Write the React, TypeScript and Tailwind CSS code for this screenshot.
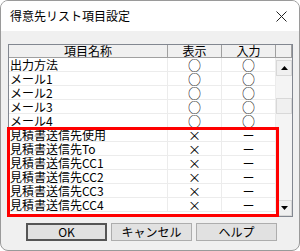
import React from 'react';

const rows = [
  { name: '出力方法', show: '○', input: '○' },
  { name: 'メール1', show: '○', input: '○' },
  { name: 'メール2', show: '○', input: '○' },
  { name: 'メール3', show: '○', input: '○' },
  { name: 'メール4', show: '○', input: '○' },
  { name: '見積書送信先使用', show: '×', input: '－' },
  { name: '見積書送信先To', show: '×', input: '－' },
  { name: '見積書送信先CC1', show: '×', input: '－' },
  { name: '見積書送信先CC2', show: '×', input: '－' },
  { name: '見積書送信先CC3', show: '×', input: '－' },
  { name: '見積書送信先CC4', show: '×', input: '－' },
];

function Btn({ label, primary }: { label: string; primary?: boolean }) {
  return (
    <button
      className={`w-[81px] h-[18px] flex items-center justify-center bg-[#e1e1e1] text-[12px] leading-[14px] text-black ${
        primary ? 'border-2 border-[#555]' : 'border border-[#adadad]'
      }`}
    >
      {label}
    </button>
  );
}

export default function App() {
  return (
    <div
      className="relative w-[300px] h-[251px] bg-[#f0f0f0] border border-[#9a9a9a] rounded-[8px] overflow-hidden flex flex-col text-black"
      style={{ fontFamily: '"Noto Sans CJK JP", "Liberation Sans", sans-serif' }}
    >
      {/* Title bar */}
      <div className="h-[30px] shrink-0 bg-white flex items-center justify-between pl-[9px] pr-[10px]">
        <span className="text-[12px] leading-[14px]">得意先リスト項目設定</span>
        <svg width="11" height="11" viewBox="0 0 11 11" className="mr-[2px]">
          <path d="M0.5 0.5 L10.5 10.5 M10.5 0.5 L0.5 10.5" stroke="#222" strokeWidth="1" />
        </svg>
      </div>

      {/* List */}
      <div className="mt-[13px] ml-[7px] w-[285px] h-[173px] border border-[#828790] bg-white flex overflow-hidden">
        <div className="w-[267px] flex flex-col">
          <div className="flex h-[13px] shrink-0 bg-[#f0f0f0] text-[12px] leading-[12px]">
            <div className="w-[159px] flex items-center justify-center border-r border-b border-[#a0a0a0]">項目名称</div>
            <div className="w-[54px] flex items-center justify-center border-r border-b border-[#a0a0a0]">表示</div>
            <div className="w-[54px] flex items-center justify-center border-r border-b border-[#a0a0a0]">入力</div>
          </div>
          <div className="flex flex-col overflow-hidden">
            {rows.map((r) => (
              <div key={r.name} className="flex h-[14px] shrink-0 text-[12px] leading-[13px]">
                <div className="w-[159px] flex items-center pl-[1px] border-r border-b border-[#ececec] whitespace-nowrap">{r.name}</div>
                <div className="w-[54px] flex items-center justify-center border-r border-b border-[#ececec] text-[13px]">{r.show}</div>
                <div className="w-[54px] flex items-center justify-center border-r border-b border-[#ececec] text-[13px]">{r.input}</div>
              </div>
            ))}
          </div>
        </div>
        {/* Scrollbar */}
        <div className="w-[16px] flex flex-col bg-[#f4f4f4]">
          <div className="h-[13px] shrink-0 bg-[#f0f0f0] border-r border-b border-[#a0a0a0]" />
          <div className="h-[16px] mt-[2px] shrink-0 bg-[#f0f0f0] border border-[#d8d8d8] flex items-center justify-center">
            <svg width="7" height="4" viewBox="0 0 7 4"><path d="M3.5 0 L7 4 L0 4 Z" fill="#000" /></svg>
          </div>
          <div className="h-[22px]" />
          <div className="h-[16px] shrink-0 bg-[#f0f0f0] border border-[#d8d8d8]" />
          <div className="flex-1" />
          <div className="h-[16px] shrink-0 bg-[#f0f0f0] border border-[#d8d8d8] flex items-center justify-center">
            <svg width="7" height="4" viewBox="0 0 7 4"><path d="M0 0 L7 0 L3.5 4 Z" fill="#000" /></svg>
          </div>
        </div>
      </div>

      {/* Buttons */}
      <div className="mt-[6px] ml-[25px] flex gap-[4px]">
        <Btn label="OK" primary />
        <Btn label="キャンセル" />
        <Btn label="ヘルプ" />
      </div>

      {/* Highlight annotation */}
      <div className="absolute left-[6px] top-[126px] w-[272px] h-[90px] border-[3px] border-[#ff0000] pointer-events-none" />
    </div>
  );
}
